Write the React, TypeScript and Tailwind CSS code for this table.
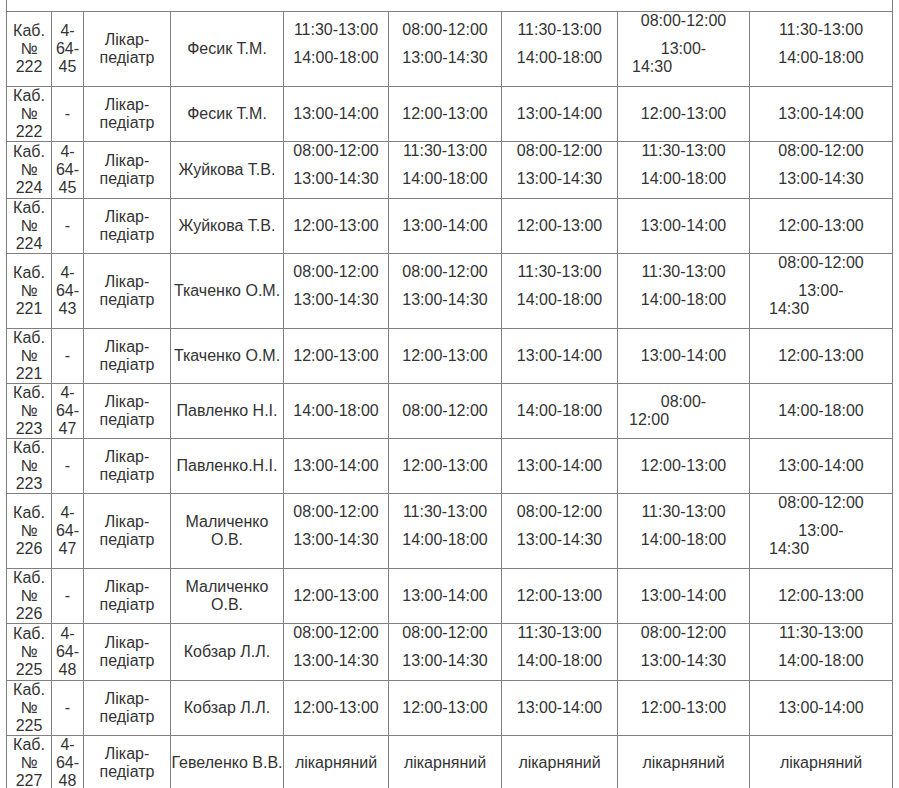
import React from 'react';

type Cell = string | string[] | { lines: string[]; wrap: [string, string]; indent: number } | { pair: [string, string]; indent: number };

interface Row {
  room: string;
  phone: string;
  doctor: string[];
  days: Cell[];
}

const A: string[] = ['11:30-13:00', '14:00-18:00'];
const B: string[] = ['08:00-12:00', '13:00-14:30'];

const rows: Row[] = [
  { room: '222', phone: '4-64-45', doctor: ['Фесик Т.М.'], days: [A, B, A, { lines: ['08:00-12:00'], wrap: ['13:00-', '14:30'], indent: 14 }, A] },
  { room: '222', phone: '-', doctor: ['Фесик Т.М.'], days: ['13:00-14:00', '12:00-13:00', '13:00-14:00', '12:00-13:00', '13:00-14:00'] },
  { room: '224', phone: '4-64-45', doctor: ['Жуйкова Т.В.'], days: [B, A, B, A, B] },
  { room: '224', phone: '-', doctor: ['Жуйкова Т.В.'], days: ['12:00-13:00', '13:00-14:00', '12:00-13:00', '13:00-14:00', '12:00-13:00'] },
  { room: '221', phone: '4-64-43', doctor: ['Ткаченко О.М.'], days: [B, B, A, A, { lines: ['08:00-12:00'], wrap: ['13:00-', '14:30'], indent: 19 }] },
  { room: '221', phone: '-', doctor: ['Ткаченко О.М.'], days: ['12:00-13:00', '12:00-13:00', '13:00-14:00', '13:00-14:00', '12:00-13:00'] },
  { room: '223', phone: '4-64-47', doctor: ['Павленко Н.І.'], days: ['14:00-18:00', '08:00-12:00', '14:00-18:00', { pair: ['08:00-', '12:00'], indent: 11 }, '14:00-18:00'] },
  { room: '223', phone: '-', doctor: ['Павленко.Н.І.'], days: ['13:00-14:00', '12:00-13:00', '13:00-14:00', '12:00-13:00', '13:00-14:00'] },
  { room: '226', phone: '4-64-47', doctor: ['Маличенко', 'О.В.'], days: [B, A, B, A, { lines: ['08:00-12:00'], wrap: ['13:00-', '14:30'], indent: 19 }] },
  { room: '226', phone: '-', doctor: ['Маличенко', 'О.В.'], days: ['12:00-13:00', '13:00-14:00', '12:00-13:00', '13:00-14:00', '12:00-13:00'] },
  { room: '225', phone: '4-64-48', doctor: ['Кобзар Л.Л.'], days: [B, B, A, B, A] },
  { room: '225', phone: '-', doctor: ['Кобзар Л.Л.'], days: ['12:00-13:00', '12:00-13:00', '13:00-14:00', '12:00-13:00', '13:00-14:00'] },
  { room: '227', phone: '4-64-48', doctor: ['Гевеленко В.В.'], days: ['лікарняний', 'лікарняний', 'лікарняний', 'лікарняний', 'лікарняний'] },
];

const td = 'border border-[#808080] align-middle text-center p-0';

function DayCell({ cell }: { cell: Cell }) {
  if (typeof cell === 'string') return <>{cell}</>;
  if (Array.isArray(cell)) {
    return (
      <>
        {cell.map((t) => (
          <div key={t} className="mb-[10px]">{t}</div>
        ))}
      </>
    );
  }
  if ('pair' in cell) {
    return (
      <>
        <div>{cell.pair[0]}</div>
        <div className="text-left" style={{ paddingLeft: cell.indent }}>{cell.pair[1]}</div>
      </>
    );
  }
  return (
    <>
      {cell.lines.map((t) => (
        <div key={t} className="mb-[10px]">{t}</div>
      ))}
      <div className="mb-[10px]">
        <div>{cell.wrap[0]}</div>
        <div className="text-left" style={{ paddingLeft: cell.indent }}>{cell.wrap[1]}</div>
      </div>
    </>
  );
}

export default function App() {
  return (
    <div className="min-h-screen bg-white pl-[6px] text-[16px] leading-[18px] text-[#333]" style={{ fontFamily: '"Liberation Sans", Arial, sans-serif' }}>
      <table className="table-fixed border-collapse w-[887px]">
        <colgroup>
          <col className="w-[45px]" />
          <col className="w-[32px]" />
          <col className="w-[87px]" />
          <col className="w-[113px]" />
          <col className="w-[105px]" />
          <col className="w-[113px]" />
          <col className="w-[116px]" />
          <col className="w-[132px]" />
          <col className="w-[143px]" />
        </colgroup>
        <tbody>
          <tr>
            <td colSpan={9} className="border-x border-b border-t-0 border-[#808080] h-[11px] p-0" />
          </tr>
          {rows.map((r, i) => (
            <tr key={i}>
              <td className={td}>Каб.<br />№<br />{r.room}</td>
              <td className={td}>
                {r.phone === '-' ? '-' : r.phone.split('-').map((p, j, arr) => (
                  <div key={j}>{p}{j < arr.length - 1 ? '-' : ''}</div>
                ))}
              </td>
              <td className={td}>Лікар-<br />педіатр</td>
              <td className={td}>
                {r.doctor.map((d) => (
                  <div key={d}>{d}</div>
                ))}
              </td>
              {r.days.map((c, j) => (
                <td key={j} className={td}>
                  <DayCell cell={c} />
                </td>
              ))}
            </tr>
          ))}
        </tbody>
      </table>
    </div>
  );
}
